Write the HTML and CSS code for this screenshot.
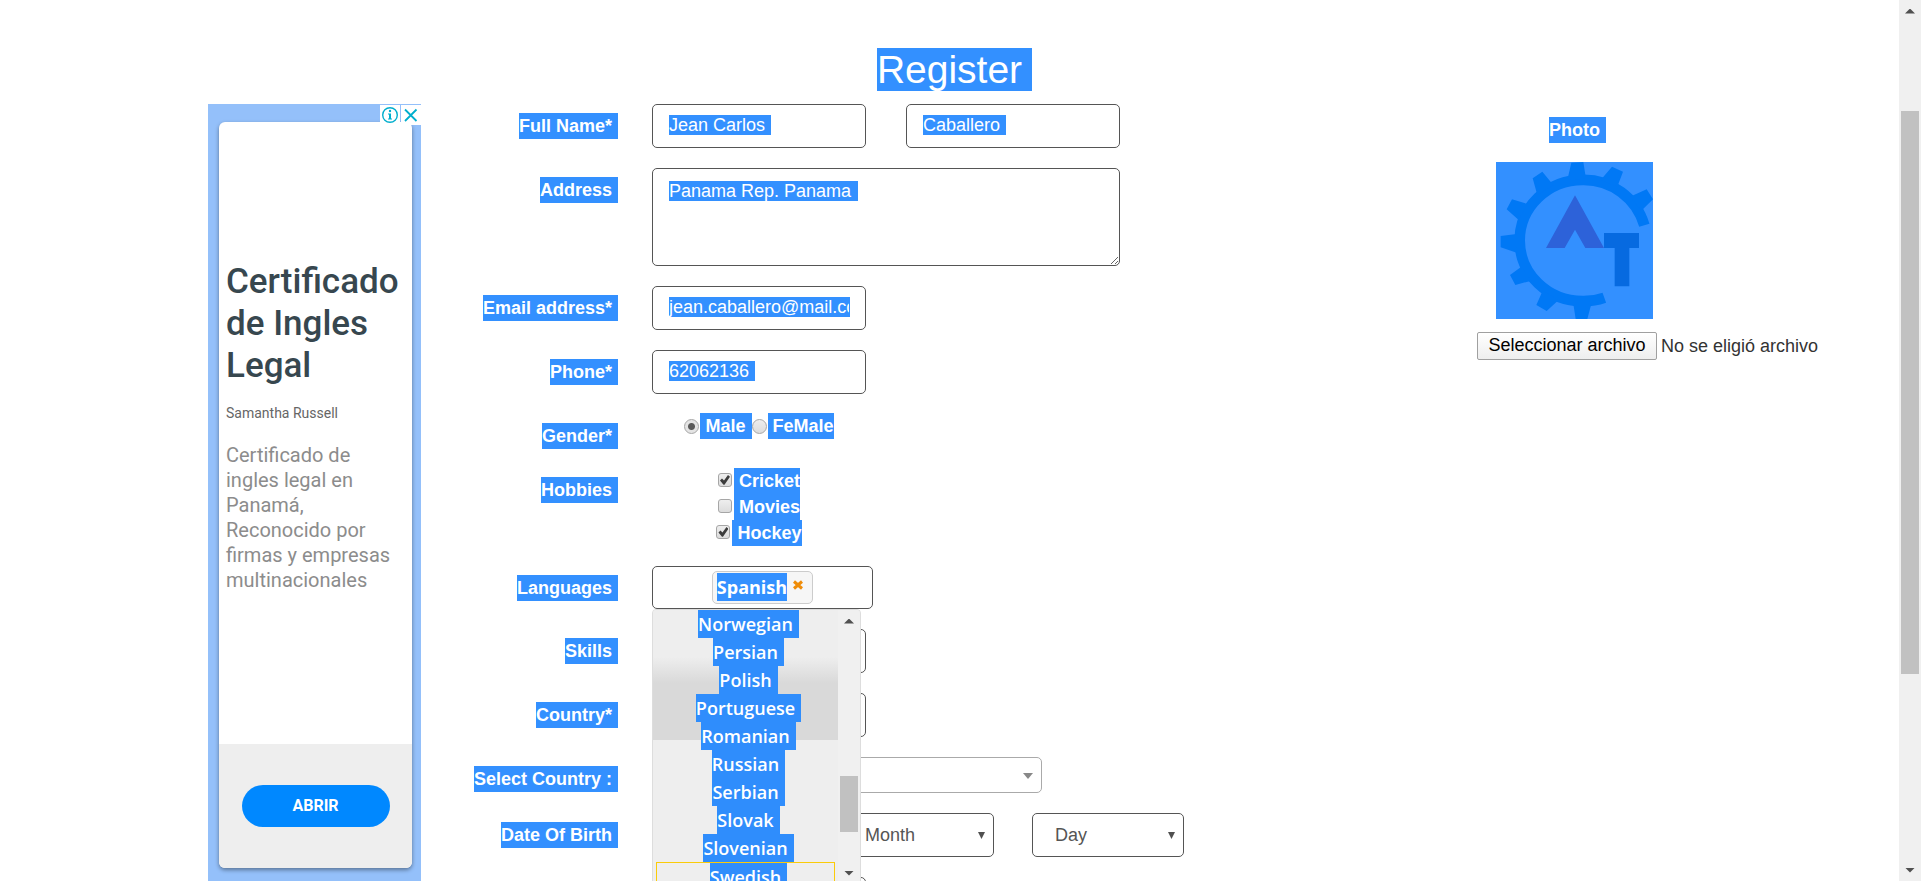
FILE: index.html
```html
<!DOCTYPE html>
<html lang="en">
<head>
<meta charset="utf-8">
<title>Register</title>
<link rel="stylesheet" href="styles.css">
</head>
<body>
<div class="window">
  <main class="page">
    <h1 class="title"><span class="mark">Register</span></h1>
    <div class="columns">
      <aside class="ad">
        <div class="ad-badges">
          <button class="ad-badge" type="button" aria-label="Ad information">
            <svg viewBox="0 0 18 18" width="18" height="18"><circle cx="9" cy="9" r="7.3" fill="none" stroke="#00aecd" stroke-width="1.4"/><circle cx="9" cy="5" r="1.2" fill="#00aecd"/><path d="M7 7.5h3v5h1v1H7v-1h1v-4H7z" fill="#00aecd"/></svg>
          </button>
          <button class="ad-badge" type="button" aria-label="Close ad">
            <svg viewBox="0 0 18 18" width="18" height="18"><path d="M3 3.5 14.5 15M14.5 3.5 3 15" stroke="#00aecd" stroke-width="1.8" fill="none"/></svg>
          </button>
        </div>
        <div class="ad-card">
          <div class="ad-copy">
            <h2 class="ad-title">Certificado de Ingles Legal</h2>
            <p class="ad-author">Samantha Russell</p>
            <p class="ad-text">Certificado de ingles legal en Panamá, Reconocido por firmas y empresas multinacionales</p>
          </div>
          <div class="ad-footer"><button class="ad-button" type="button">ABRIR</button></div>
        </div>
      </aside>

      <form class="form">
        <div class="row">
          <label class="label" for="first"><span class="mark">Full Name*</span></label>
          <div class="fields names">
            <input class="box field value-first" id="first" type="text" value="Jean Carlos">
            <input class="box field value-last" type="text" aria-label="Last name" value="Caballero">
          </div>
        </div>
        <div class="row">
          <label class="label" for="address"><span class="mark">Address</span></label>
          <div class="fields"><textarea class="box area" id="address">Panama Rep. Panama</textarea></div>
        </div>
        <div class="row">
          <label class="label" for="email"><span class="mark">Email address*</span></label>
          <div class="fields"><input class="box field value-email" id="email" type="email" value="jean.caballero@mail.com"></div>
        </div>
        <div class="row">
          <label class="label" for="phone"><span class="mark">Phone*</span></label>
          <div class="fields"><input class="box field value-phone" id="phone" type="tel" value="62062136"></div>
        </div>
        <div class="row row-gender">
          <span class="label"><span class="mark">Gender*</span></span>
          <div class="fields">
            <div class="choices inline">
              <label class="choice"><input class="radio" type="radio" name="gender" checked><span class="choice-text spaced">Male</span></label>
              <label class="choice"><input class="radio" type="radio" name="gender"><span class="choice-text">FeMale</span></label>
            </div>
          </div>
        </div>
        <div class="row">
          <span class="label"><span class="mark">Hobbies</span></span>
          <div class="fields">
            <div class="choices">
              <label class="choice"><input class="check" type="checkbox" checked><span class="choice-text">Cricket</span></label>
              <label class="choice"><input class="check" type="checkbox"><span class="choice-text">Movies</span></label>
              <label class="choice"><input class="check" type="checkbox" checked><span class="choice-text">Hockey</span></label>
            </div>
          </div>
        </div>
        <div class="row">
          <span class="label"><span class="mark">Languages</span></span>
          <div class="fields languages">
            <div class="box tags">
              <span class="tag"><span class="tag-text">Spanish</span><button class="tag-remove" type="button" aria-label="Remove Spanish"><svg viewBox="0 0 10 10" width="10" height="10"><path d="M1 1.5 9 8.500M9 1.500 1 8.500" stroke="#ef8c08" stroke-width="3" fill="none"/></svg></button></span>
            </div>
            <div class="dropdown">
              <ul class="options">
                <li class="option"><a href="#"><span class="mark">Norwegian</span></a></li>
                <li class="option"><a href="#"><span class="mark">Persian</span></a></li>
                <li class="option"><a href="#"><span class="mark">Polish</span></a></li>
                <li class="option"><a href="#"><span class="mark">Portuguese</span></a></li>
                <li class="option"><a href="#"><span class="mark">Romanian</span></a></li>
                <li class="option"><a href="#"><span class="mark">Russian</span></a></li>
                <li class="option"><a href="#"><span class="mark">Serbian</span></a></li>
                <li class="option"><a href="#"><span class="mark">Slovak</span></a></li>
                <li class="option"><a href="#"><span class="mark">Slovenian</span></a></li>
                <li class="option hovered"><a href="#"><span class="mark">Swedish</span></a></li>
              </ul>
              <div class="scrollbar">
                <span class="arrow up"></span>
                <span class="list-before"></span><span class="thumb list-thumb"></span><span class="list-after"></span>
                <span class="arrow down"></span>
              </div>
            </div>
          </div>
        </div>
        <div class="row">
          <label class="label" for="skills"><span class="mark">Skills</span></label>
          <div class="fields"><select class="box field" id="skills"><option></option></select></div>
        </div>
        <div class="row">
          <label class="label" for="country"><span class="mark">Country*</span></label>
          <div class="fields"><select class="box field" id="country"><option></option></select></div>
        </div>
        <div class="row">
          <label class="label" for="pick"><span class="mark">Select Country :</span></label>
          <div class="fields"><span class="select wide"><select class="box" id="pick"><option></option></select></span></div>
        </div>
        <div class="row">
          <label class="label" for="year"><span class="mark">Date Of Birth</span></label>
          <div class="fields dates">
            <span class="select"><select class="box" id="year"><option></option></select></span>
            <span class="select"><select class="box" aria-label="Month"><option>Month</option></select></span>
            <span class="select"><select class="box" aria-label="Day"><option>Day</option></select></span>
          </div>
        </div>
        <div class="row">
          <span class="label"></span>
          <div class="fields"><input class="box field" type="password" aria-label="Password"></div>
        </div>
      </form>

      <section class="photo">
        <div class="preview">
          <label class="photo-label" for="file"><span class="mark">Photo</span></label>
          <svg class="logo" viewBox="108 186 471 471" role="img" aria-label="Logo">
            <rect x="108" y="186" width="471" height="471" fill="#3390ff"/>
            <g fill="#0078f5">
              <path d="M553 376A189 189 0 0 0 368 239.500A189 182 0 0 0 179 421.500A189 182 0 0 0 368 603.500A184 184 0 0 0 433 593" fill="none" stroke="#0078f5" stroke-width="32"/>
              <path d="M322 240 334 188 370 186 378 236zM422 240 456 200 489 215 472 260zM510 290 560 268 579 298 544 332zM232 285 218 235 247 215 280 255zM202 312 156 298 140 328 176 360zM170 402 122 408 122 442 170 458zM184 500 150 525 166 555 214 542zM248 572 229 615 260 633 296 600zM340 612 347 657 382 657 394 612z"/>
            </g>
            <path d="M345 286 432 444H376L345 389 314 444H258z" fill="#2d62d9"/>
            <path d="M432 399H537V444H508V559H464V444H432z" fill="#076ae0"/>
          </svg>
        </div>
        <div class="file">
          <input class="file-input" id="file" type="file">
          <label class="file-button" for="file">Seleccionar archivo</label>
          <span class="file-status">No se eligió archivo</span>
        </div>
      </section>
    </div>
  </main>
  <div class="scrollbar">
    <span class="arrow up"></span>
    <span class="page-before"></span><span class="thumb page-thumb"></span><span class="page-after"></span>
    <span class="arrow down"></span>
  </div>
</div>
</body>
</html>
```
FILE: styles.css
```css
* { box-sizing: border-box; }

body {
  margin: 0;
  font: 18px/26px "Liberation Sans", Arial, sans-serif;
  color: #333;
  background: #fff;
}

button, input, select, textarea { font: inherit; color: inherit; margin: 0; }

.window { display: flex; height: 100vh; overflow: hidden; }
.page { flex: 1; min-width: 0; overflow: hidden; padding-top: 48px; }

.mark {
  display: inline-block;
  padding-right: 6px;
  color: #fff;
  background: #3390ff;
}

/* Title */
.title {
  margin: 0 0 13px;
  font-size: 39px;
  font-weight: 400;
  line-height: 43px;
  text-align: center;
}
.title .mark { padding-right: 10px; margin-right: -10px; }

.columns {
  display: grid;
  grid-template-columns: 213px minmax(0, 1fr) 342px;
  padding: 0 80px 0 208px;
}

/* Advertisement */
.ad {
  position: relative;
  display: flex;
  align-items: flex-start;
  padding: 18px 9px 18px 11px;
  background: #94c0fa;
  font-family: Roboto, sans-serif;
}
.ad-badges {
  position: absolute;
  top: 1px;
  right: 0;
  display: flex;
  gap: 1px;
}
.ad-badge {
  width: 20px;
  height: 20px;
  padding: 1px;
  border: 0;
  background: #fff;
}
.ad-badge svg { display: block; }
.ad-card {
  flex: 1;
  min-height: 746px;
  display: flex;
  flex-direction: column;
  border-radius: 6px;
  overflow: hidden;
  background: #fff;
  box-shadow: 0 2px 4px rgba(0, 0, 0, .4);
}
.ad-copy {
  flex: 1;
  display: flex;
  flex-direction: column;
  justify-content: center;
  padding: 0 7px 12px;
}
.ad-title {
  margin: 0 0 16px;
  font-size: 35px;
  font-weight: 500;
  line-height: 42px;
  color: #37474f;
}
.ad-author { margin: 0 0 20px; font-size: 14px; line-height: 20px; color: #666; }
.ad-text { margin: 0; font-size: 20px; line-height: 25px; color: #8c8c8c; }
.ad-footer {
  display: flex;
  align-items: center;
  justify-content: center;
  height: 124px;
  background: #eee;
}
.ad-button {
  width: 148px;
  height: 42px;
  border: 0;
  border-radius: 21px;
  background: #08f;
  color: #fff;
  font-size: 16px;
  font-weight: 700;
}

/* Form rows */
.form { display: flex; flex-direction: column; gap: 20px; }
.row {
  display: grid;
  grid-template-columns: 197px minmax(0, 1fr);
  column-gap: 34px;
}
.label { padding-top: 9px; font-weight: 700; text-align: right; }
.label .mark { display: block; width: fit-content; margin-left: auto; }

.box {
  display: block;
  border: 1px solid #555;
  border-radius: 5px;
  background-color: #fff;
  background-repeat: no-repeat;
  appearance: none;
  outline: 0;
}
.field {
  width: 214px;
  height: 44px;
  padding: 0 16px 2px;
  color: #fff;
  background-position: 16px 10px;
}
.field, .area { background-image: linear-gradient(#3390ff, #3390ff); background-size: 0 0; }
.value-first { background-size: 102px 20px; }
.value-last { background-size: 83px 20px; }
.value-email { background-size: 181px 20px; }
.value-phone { background-size: 86px 20px; }
.names { display: flex; gap: 40px; }
.area {
  width: 468px;
  height: 98px;
  padding: 9px 16px;
  color: #fff;
  background-position: 16px 12px;
  background-size: 189px 20px;
}

/* Radios and check boxes */
.row-gender { height: 34px; }
.row-gender .choices { margin-top: -1px; }
.choices {
  width: 214px;
  display: flex;
  flex-direction: column;
  align-items: center;
}
.choices.inline { flex-direction: row; justify-content: center; }
.choice { display: flex; align-items: flex-start; font-weight: 700; }
.choice-text { padding-left: 5px; color: #fff; background: #3390ff; }
.choice-text.spaced { padding-right: 6px; }
.radio, .check {
  appearance: none;
  border: 1px solid #a6a6a6;
  background: linear-gradient(#eee, #dcdcdc);
}
.radio { width: 15px; height: 15px; margin: 6px 1px 0 0; border-radius: 50%; }
.radio:checked { background: radial-gradient(circle, #5a5a5a 0 3px, #e4e4e4 4px); }
.check {
  position: relative;
  width: 14px;
  height: 14px;
  margin: 5px 2px 0 0;
  border-radius: 3px;
}
.check:checked::after {
  content: "";
  position: absolute;
  inset: 1px;
  background: #3c3c3c;
  clip-path: polygon(0 55%, 20% 35%, 40% 55%, 80% 0, 100% 18%, 45% 98%, 35% 98%);
}

/* Languages */
.languages {
  position: relative;
  font-family: "Open Sans", "Noto Sans", sans-serif;
  font-weight: 600;
}
.tags {
  width: 221px;
  height: 43px;
  display: flex;
  align-items: center;
  justify-content: center;
}
.tag {
  display: flex;
  height: 33px;
  padding: 1px 9px 0 4px;
  border: 1px solid #ccc;
  border-radius: 5px;
  background: #f6f6f6;
}
.tag-text {
  height: 28px;
  font-weight: 700;
  line-height: 28px;
  color: #fff;
  background: #3390ff;
}
.tag-remove {
  align-self: flex-start;
  margin: 7px 0 0 6px;
  padding: 0;
  border: 0;
  background: none;
  line-height: 1;
}
.tag-remove svg { display: block; }
.dropdown {
  position: absolute;
  z-index: 2;
  top: 43px;
  left: 0;
  width: 209px;
  height: 276px;
  display: flex;
  overflow: hidden;
  border: 1px solid #ddd;
  border-radius: 4px;
  background: #f0f0f0;
}
.options {
  flex: 1;
  margin: 0;
  padding: 0 3px;
  list-style: none;
  background: linear-gradient(#eee 47px, #d9d9d9 73px, #d9d9d9 130px, #eee 130px);
}
.option { height: 28px; line-height: 28px; text-align: center; }
.option a { color: inherit; text-decoration: none; display: block; }
.option .mark { margin-right: -6px; background: #2f8dfc; }
.option.hovered { height: 30px; border: 1px solid #fbcb09; }

/* Drawn scroll bars */
.scrollbar {
  width: 22px;
  display: flex;
  flex-direction: column;
  background: #f0f0f0;
}
.arrow { height: 22px; display: flex; align-items: center; justify-content: center; }
.arrow::before {
  content: "";
  width: 10px;
  height: 5px;
  background: #505050;
}
.up::before { clip-path: polygon(50% 0, 100% 100%, 0 100%); }
.down::before { clip-path: polygon(0 0, 100% 0, 50% 100%); }
.thumb { margin: 0 2px; background: #c1c1c1; }
.page-before { flex: 89; }
.page-thumb { flex: 563; }
.page-after { flex: 185; }
.list-before { flex: 144; }
.list-thumb { flex: 56; }
.list-after { flex: 30; }

/* Drop-downs */
.select { position: relative; display: block; width: 152px; }
.select .box { width: 100%; height: 44px; padding: 0 22px; color: #555; }
.select::after {
  content: "";
  position: absolute;
  top: 19px;
  right: 9px;
  width: 7px;
  height: 7px;
  background: #505050;
  clip-path: polygon(0 0, 100% 0, 50% 100%);
  pointer-events: none;
}
.select.wide { width: 390px; }
.wide .box { height: 36px; border-color: #aaa; }
.wide::after { top: 16px; width: 10px; height: 6px; background: #888; }
.dates { display: flex; gap: 38px; }

/* Photo */
.photo { padding-top: 13px; }
.preview {
  width: 195px;
  display: flex;
  flex-direction: column;
  align-items: center;
}
.photo-label { font-weight: 700; }
.photo-label .mark { display: block; margin-right: -6px; }
.logo { width: 157px; height: 157px; margin: 19px 0 13px; }
.file { display: flex; align-items: center; gap: 4px; white-space: nowrap; }
.file-input { position: absolute; width: 1px; height: 1px; opacity: 0; }
.file-button {
  width: 180px;
  height: 28px;
  border: 1px solid #a0a0a0;
  border-radius: 2px;
  text-align: center;
  line-height: 25px;
  color: #000;
  background: linear-gradient(#fff, #eee);
}
```
